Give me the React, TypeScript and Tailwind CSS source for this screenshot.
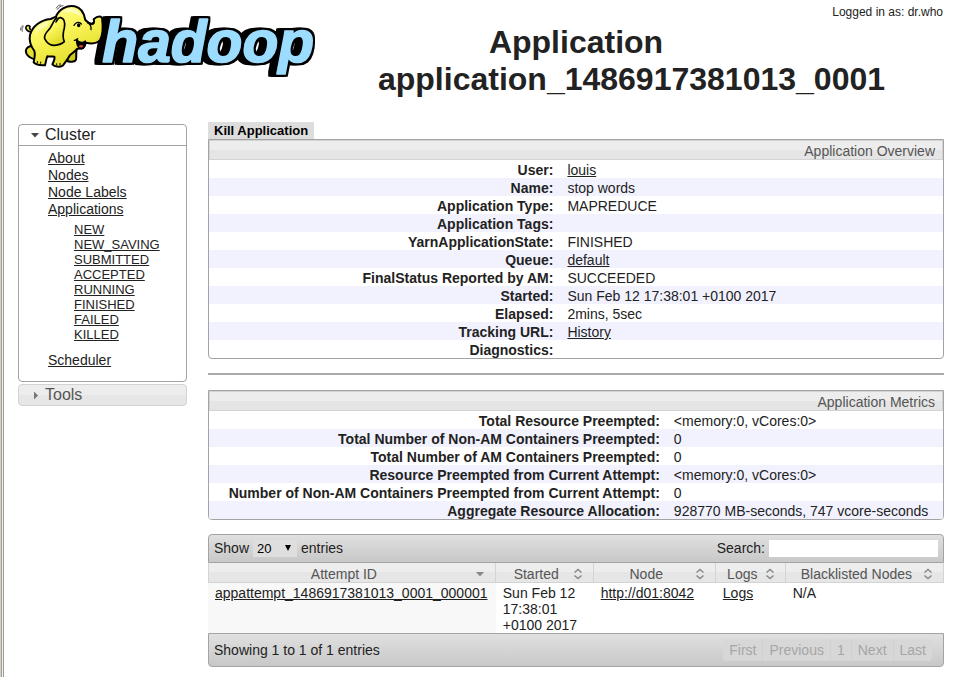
import type { ReactNode } from "react";

const A = ({ children }: { children: ReactNode }) => (
  <a href="#" className="underline">
    {children}
  </a>
);

function Logo() {
  return (
    <svg viewBox="54 0 906 240" className="block h-20 w-[302px]" role="img" aria-label="hadoop">
      <defs>
        <linearGradient id="skin" x1="0" y1="0" x2="0.5" y2="1">
          <stop offset="0" stopColor="#ffff9c" />
          <stop offset="0.5" stopColor="#faf55a" />
          <stop offset="1" stopColor="#e2dc28" />
        </linearGradient>
        <filter id="extrude" x="-10%" y="-20%" width="120%" height="150%" colorInterpolationFilters="sRGB">
          <feMorphology in="SourceAlpha" operator="dilate" radius="6" result="edge" />
          <feOffset in="edge" dx="-6" result="s1" />
          <feOffset in="edge" dx="-12" result="s2" />
          <feOffset in="edge" dx="-18" result="s3" />
          <feMerge>
            <feMergeNode in="s3" />
            <feMergeNode in="s2" />
            <feMergeNode in="s1" />
            <feMergeNode in="edge" />
            <feMergeNode in="SourceGraphic" />
          </feMerge>
        </filter>
      </defs>
      <text
        x="307"
        y="185"
        fontSize="176"
        fontWeight="700"
        fontStyle="italic"
        fontFamily='"Liberation Sans", Arial, sans-serif'
        fill="#9bdcff"
        stroke="#9bdcff"
        strokeWidth="5"
        strokeLinejoin="round"
        filter="url(#extrude)"
      >
        hadoop
      </text>
      <g stroke="#000" strokeWidth="6" strokeLinejoin="round" strokeLinecap="round" fill="url(#skin)">
        <path d="M100 92C90 98 81 94 78 86C76 77 84 74 90 79C88 84 88 87 92 88" strokeWidth="5" />
        <path d="M201 160L230 150C227 160 230 170 228 178C227 185 214 187 203 184Z" fill="#cfcb1c" />
        <path d="M92 138C80 141 75 150 79 160C83 168 94 175 104 178L112 150Z" fill="#e4df30" />
        <path d="M152 57C122 60 97 78 90 105C86 124 93 139 103 153C107 164 102 178 101 187C108 196 124 195 135 196C138 187 138 177 142 169C150 171 157 168 163 170C166 179 160 186 157 193C164 200 178 203 188 197C194 189 204 177 210 165C216 160 226 154 232 146C246 148 254 140 258 128C275 132 292 130 300 120C310 103 309 76 306 53C299 47 289 51 281 58C284 66 282 71 276 72C268 70 261 66 256 60C252 36 242 23 224 19C202 14 176 28 168 50Z" />
        <path d="M230 118C235 127 246 130 256 123C257 136 253 146 244 147C234 144 229 132 230 118Z" fill="#000" strokeWidth="4" />
        <path d="M170 53C160 62 157 76 149 86C140 96 131 104 134 116C140 128 151 137 163 136C175 135 186 132 193 125C187 112 189 98 193 84C196 66 191 55 182 53C177 52 172 58 168 66" strokeWidth="5" />
      </g>
      <path d="M236 139C240 133 247 134 250 138C247 144 241 144 236 139Z" fill="#d2452c" />
      <g fill="none" stroke="#000" strokeLinecap="round" strokeLinejoin="round">
        <path d="M222 76C228 66 238 64 244 72M263 69C272 73 274 82 273 89M270 75L278 68M223 121C226 121 230 119 233 116" strokeWidth="4" />
        <path d="M112 189V184M122 190V186M170 196V191M180 195V190" strokeWidth="3" />
        <path d="M172 28C176 21 183 18 189 17M169 24C172 18 177 15 182 15M62 90C61 84 64 79 69 77M67 94C64 88 66 83 70 81" strokeWidth="2" />
      </g>
      <ellipse cx="236" cy="76" rx="5" ry="6" />
      <path d="M109 85C119 73 133 65 148 63L141 82C126 84 115 90 106 104Z" fill="#ffffd0" opacity=".6" />
      <path d="M184 38C196 25 214 22 227 28C237 34 242 42 244 50C228 38 204 33 184 38Z" fill="#ffffd5" opacity=".7" />
    </svg>
  );
}

const APP_STATES = ["NEW", "NEW_SAVING", "SUBMITTED", "ACCEPTED", "RUNNING", "FINISHED", "FAILED", "KILLED"];

function Sidebar() {
  return (
    <nav className="w-[169px] shrink-0 pt-0.5">
      <div className="rounded border border-[#a3a3a3] bg-white">
        <button className="flex h-[21px] w-full items-center gap-1 border-b border-[#a3a3a3] pl-3 text-left text-base leading-5">
          <svg viewBox="0 0 10 10" className="size-[10px]" fill="#444">
            <path d="M0 3H8L4 7.5Z" />
          </svg>
          Cluster
        </button>
        <ul className="pt-1 pb-3 pl-[29px] leading-[17px]">
          <li><A>About</A></li>
          <li><A>Nodes</A></li>
          <li><A>Node Labels</A></li>
          <li>
            <A>Applications</A>
            <ul className="pt-1 pb-2.5 pl-[26px] text-[13px] leading-[15px]">
              {APP_STATES.map((s) => (
                <li key={s}><A>{s}</A></li>
              ))}
            </ul>
          </li>
          <li><A>Scheduler</A></li>
        </ul>
      </div>
      <button className="mt-0.5 flex h-[22px] w-full items-center gap-1 rounded border border-[#d3d3d3] bg-linear-to-b from-[#ededed] from-50% to-[#e6e6e6] to-50% pl-3 text-left text-base leading-5 text-[#555]">
        <svg viewBox="0 0 10 10" className="size-[10px]" fill="#777">
          <path d="M3 1.5V9.5L7 5.5Z" />
        </svg>
        Tools
      </button>
    </nav>
  );
}

type Row = [string, ReactNode];

const OVERVIEW: Row[] = [
  ["User:", <A>louis</A>],
  ["Name:", "stop words"],
  ["Application Type:", "MAPREDUCE"],
  ["Application Tags:", ""],
  ["YarnApplicationState:", "FINISHED"],
  ["Queue:", <A>default</A>],
  ["FinalStatus Reported by AM:", "SUCCEEDED"],
  ["Started:", "Sun Feb 12 17:38:01 +0100 2017"],
  ["Elapsed:", "2mins, 5sec"],
  ["Tracking URL:", <A>History</A>],
  ["Diagnostics:", ""],
];

const METRICS: Row[] = [
  ["Total Resource Preempted:", "<memory:0, vCores:0>"],
  ["Total Number of Non-AM Containers Preempted:", "0"],
  ["Total Number of AM Containers Preempted:", "0"],
  ["Resource Preempted from Current Attempt:", "<memory:0, vCores:0>"],
  ["Number of Non-AM Containers Preempted from Current Attempt:", "0"],
  ["Aggregate Resource Allocation:", "928770 MB-seconds, 747 vcore-seconds"],
];

function InfoBox({ title, rows }: { title: string; rows: Row[] }) {
  return (
    <section className="overflow-hidden rounded-b border border-[#a3a3a3]">
      <h2 className="h-5 border border-[#d3d3d3] bg-linear-to-b from-[#ededed] from-50% to-[#e5e5e5] to-50% px-[7px] text-right leading-5 text-[#555]">
        {title}
      </h2>
      <table className="w-full">
        <tbody>
          {rows.map(([label, value]) => (
            <tr key={label} className="h-[18px] leading-4 *:px-[7px] *:pt-0.5 even:bg-[#f2f2ff]">
              <th scope="row" className="text-right font-bold whitespace-nowrap">{label}</th>
              <td>{value}</td>
            </tr>
          ))}
        </tbody>
      </table>
    </section>
  );
}

const COLUMNS = [
  { name: "Attempt ID", width: "w-[39.1%]", sorted: true },
  { name: "Started", width: "w-[13.3%]", sorted: false },
  { name: "Node", width: "w-[16.6%]", sorted: false },
  { name: "Logs", width: "w-[9.5%]", sorted: false },
  { name: "Blacklisted Nodes", width: "w-[21.5%]", sorted: false },
];

function SortIcon({ sorted }: { sorted: boolean }) {
  return (
    <svg viewBox="0 0 16 16" className="size-4 shrink-0" fill={sorted ? "#888" : "none"} stroke={sorted ? "none" : "#888"} strokeWidth="1.5">
      {sorted ? <path d="M4 6H12L8 10.5Z" /> : <path d="M4.5 6.5L8 3.5L11.5 6.5M4.5 9.5L8 12.5L11.5 9.5" />}
    </svg>
  );
}

function Attempts() {
  return (
    <section className="mt-3.5">
      <div className="flex h-[29px] items-center justify-between rounded-t border border-[#a3a3a3] bg-linear-to-b from-[#e0e0e0] to-[#c8c8c8] px-[5px] pb-px">
        <label className="flex items-center gap-1">
          Show
          <span className="relative">
            <select className="block h-[17px] w-11 appearance-none bg-[#dedede] pl-1 text-[13px] leading-[17px] text-black" defaultValue="20">
              <option>20</option>
              <option>40</option>
              <option>60</option>
              <option>80</option>
              <option>100</option>
            </select>
            <svg viewBox="0 0 8 8" className="pointer-events-none absolute top-1 right-[5px] size-2">
              <path d="M1 1H7L4 7Z" />
            </svg>
          </span>
          entries
        </label>
        <label className="flex items-center gap-1">
          Search:
          <input type="text" className="h-[17px] w-[169px] bg-white px-1 text-[13px]" />
        </label>
      </div>
      <table className="w-full table-fixed border-separate border-spacing-0">
        <thead>
          <tr className="h-5">
            {COLUMNS.map((c) => (
              <th key={c.name} scope="col" className={`${c.width} border-r border-b border-[#d3d3d3] bg-linear-to-b from-[#ededed] from-50% to-[#e6e6e6] to-50% p-0 font-normal text-[#555] first:border-l`}>
                <button className="flex h-[19px] w-full items-center px-[7px] pt-[3px] leading-4">
                  <span className="flex-1 text-center whitespace-nowrap">{c.name}</span>
                  <SortIcon sorted={c.sorted} />
                </button>
              </th>
            ))}
          </tr>
        </thead>
        <tbody>
          <tr className="align-top leading-4 *:px-[7px] *:pt-0.5">
            <td className="bg-[#f8f8f8]"><A>appattempt_1486917381013_0001_000001</A></td>
            <td>Sun Feb 12 17:38:01 +0100 2017</td>
            <td><A>http://d01:8042</A></td>
            <td><A>Logs</A></td>
            <td>N/A</td>
          </tr>
        </tbody>
      </table>
      <div className="flex h-[34px] items-center justify-between rounded-b border border-[#a3a3a3] bg-linear-to-b from-[#e0e0e0] to-[#c8c8c8] pr-[11px] pl-[5px]">
        <p>Showing 1 to 1 of 1 entries</p>
        <div className="flex h-[22px] divide-x divide-[#d0d0d0] overflow-hidden rounded bg-[#d7d7d7] text-[#a6a6a6]">
          {["First", "Previous", "1", "Next", "Last"].map((p) => (
            <button key={p} disabled className="px-1.5">{p}</button>
          ))}
        </div>
      </div>
    </section>
  );
}

export default function App() {
  return (
    <div className="flex min-h-screen bg-white font-['Liberation_Sans',Arial,sans-serif] text-sm text-[#222]">
      <div className="flex w-1 shrink-0">
        <div className="w-0.5 border-r border-[#a39d94] bg-[#d4d0c8]" />
        <div className="w-0.5 border-r border-[#999] bg-[#f4f2ee]" />
      </div>
      <div className="min-w-0 flex-1 pr-2.5 pl-3.5">
        <header className="flow-root h-[122px] pr-px">
          <div className="float-left">
            <Logo />
          </div>
          <div className="float-right h-10 w-[111px] pt-1 text-right text-xs leading-4">Logged in as: dr.who</div>
          <h1 className="mt-6 text-center text-[32px] leading-[37px] font-bold">
            Application application_1486917381013_0001
          </h1>
        </header>
        <div className="flex items-start gap-[21px]">
          <Sidebar />
          <main className="min-w-0 flex-1">
            <button className="block h-[17px] bg-[#ddd] px-1.5 text-[13px] leading-[17px] font-bold text-black">
              Kill Application
            </button>
            <InfoBox title="Application Overview" rows={OVERVIEW} />
            <hr className="mt-3.5 mb-[15px] border-t-2 border-[#a9a9a9]" />
            <InfoBox title="Application Metrics" rows={METRICS} />
            <Attempts />
          </main>
        </div>
      </div>
    </div>
  );
}
